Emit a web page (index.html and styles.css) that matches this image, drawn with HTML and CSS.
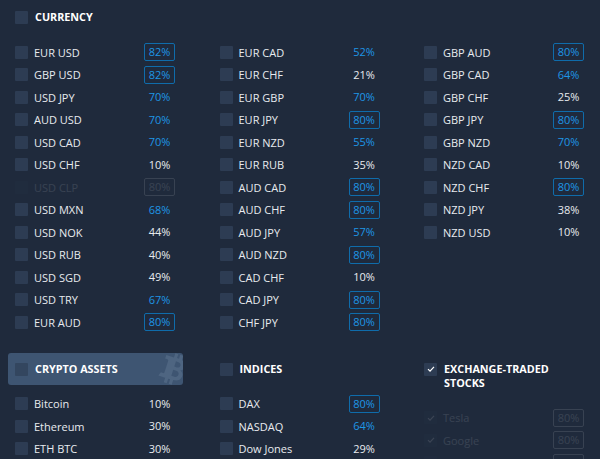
FILE: index.html
```html
<!DOCTYPE html>
<html lang="en">
<head>
<meta charset="utf-8">
<title>Assets</title>
<link rel="stylesheet" href="styles.css">
</head>
<body>
<main class="page">
  <section class="group">
    <div class="head"><span class="box"></span><span class="title">CURRENCY</span></div>
    <div class="grid">
      <div class="col">
        <div class="row"><span class="box"></span><span class="name">EUR USD</span><span class="val badge">82%</span></div>
        <div class="row"><span class="box"></span><span class="name">GBP USD</span><span class="val badge">82%</span></div>
        <div class="row"><span class="box"></span><span class="name">USD JPY</span><span class="val blue">70%</span></div>
        <div class="row"><span class="box"></span><span class="name">AUD USD</span><span class="val blue">70%</span></div>
        <div class="row"><span class="box"></span><span class="name">USD CAD</span><span class="val blue">70%</span></div>
        <div class="row"><span class="box"></span><span class="name">USD CHF</span><span class="val">10%</span></div>
        <div class="row off"><span class="box"></span><span class="name">USD CLP</span><span class="val badge">80%</span></div>
        <div class="row"><span class="box"></span><span class="name">USD MXN</span><span class="val blue">68%</span></div>
        <div class="row"><span class="box"></span><span class="name">USD NOK</span><span class="val">44%</span></div>
        <div class="row"><span class="box"></span><span class="name">USD RUB</span><span class="val">40%</span></div>
        <div class="row"><span class="box"></span><span class="name">USD SGD</span><span class="val">49%</span></div>
        <div class="row"><span class="box"></span><span class="name">USD TRY</span><span class="val blue">67%</span></div>
        <div class="row"><span class="box"></span><span class="name">EUR AUD</span><span class="val badge">80%</span></div>
      </div>
      <div class="col">
        <div class="row"><span class="box"></span><span class="name">EUR CAD</span><span class="val blue">52%</span></div>
        <div class="row"><span class="box"></span><span class="name">EUR CHF</span><span class="val">21%</span></div>
        <div class="row"><span class="box"></span><span class="name">EUR GBP</span><span class="val blue">70%</span></div>
        <div class="row"><span class="box"></span><span class="name">EUR JPY</span><span class="val badge">80%</span></div>
        <div class="row"><span class="box"></span><span class="name">EUR NZD</span><span class="val blue">55%</span></div>
        <div class="row"><span class="box"></span><span class="name">EUR RUB</span><span class="val">35%</span></div>
        <div class="row"><span class="box"></span><span class="name">AUD CAD</span><span class="val badge">80%</span></div>
        <div class="row"><span class="box"></span><span class="name">AUD CHF</span><span class="val badge">80%</span></div>
        <div class="row"><span class="box"></span><span class="name">AUD JPY</span><span class="val blue">57%</span></div>
        <div class="row"><span class="box"></span><span class="name">AUD NZD</span><span class="val badge">80%</span></div>
        <div class="row"><span class="box"></span><span class="name">CAD CHF</span><span class="val">10%</span></div>
        <div class="row"><span class="box"></span><span class="name">CAD JPY</span><span class="val badge">80%</span></div>
        <div class="row"><span class="box"></span><span class="name">CHF JPY</span><span class="val badge">80%</span></div>
      </div>
      <div class="col">
        <div class="row"><span class="box"></span><span class="name">GBP AUD</span><span class="val badge">80%</span></div>
        <div class="row"><span class="box"></span><span class="name">GBP CAD</span><span class="val blue">64%</span></div>
        <div class="row"><span class="box"></span><span class="name">GBP CHF</span><span class="val">25%</span></div>
        <div class="row"><span class="box"></span><span class="name">GBP JPY</span><span class="val badge">80%</span></div>
        <div class="row"><span class="box"></span><span class="name">GBP NZD</span><span class="val blue">70%</span></div>
        <div class="row"><span class="box"></span><span class="name">NZD CAD</span><span class="val">10%</span></div>
        <div class="row"><span class="box"></span><span class="name">NZD CHF</span><span class="val badge">80%</span></div>
        <div class="row"><span class="box"></span><span class="name">NZD JPY</span><span class="val">38%</span></div>
        <div class="row"><span class="box"></span><span class="name">NZD USD</span><span class="val">10%</span></div>
      </div>
    </div>
  </section>
  <section class="grid">
    <div class="col">
      <div class="head active">
        <span class="box"></span><span class="title">CRYPTO ASSETS</span>
        <svg class="coin" viewBox="0 0 24 32" aria-hidden="true"><path d="M9 1h3v4h2V1h3v4.400c3.500 1 5 3.400 4.600 6-.3 2-1.500 3.300-3.100 3.900 2.500.8 3.900 2.800 3.500 5.500-.5 3.500-3.100 5.200-7 5.400V31h-3v-4.600h-2V31H7v-4.600H0l1.500-3.600h2.200c.7 0 1-.4 1-1V10.200c0-.7-.4-1.200-1.200-1.200H1.300V5.300H9zm3 7.300v5.300h2.500c1.600 0 2.800-1 2.800-2.700 0-1.600-1.200-2.600-2.800-2.600zm0 8.500v6h3c1.900 0 3.200-1.200 3.200-3 0-1.900-1.300-3-3.200-3z"/></svg>
      </div>
      <div class="row"><span class="box"></span><span class="name">Bitcoin</span><span class="val">10%</span></div>
      <div class="row"><span class="box"></span><span class="name">Ethereum</span><span class="val">30%</span></div>
      <div class="row"><span class="box"></span><span class="name">ETH BTC</span><span class="val">30%</span></div>
    </div>
    <div class="col">
      <div class="head"><span class="box"></span><span class="title">INDICES</span></div>
      <div class="row"><span class="box"></span><span class="name">DAX</span><span class="val badge">80%</span></div>
      <div class="row"><span class="box"></span><span class="name">NASDAQ</span><span class="val blue">64%</span></div>
      <div class="row"><span class="box"></span><span class="name">Dow Jones</span><span class="val">29%</span></div>
    </div>
    <div class="col">
      <div class="head"><span class="box"><svg class="tick" viewBox="0 0 10 8" aria-hidden="true"><path d="M1 4.200 3.700 6.800 9 1.200"/></svg></span><span class="title">EXCHANGE-TRADED STOCKS</span></div>
      <div class="row off"><span class="box"><svg class="tick" viewBox="0 0 10 8" aria-hidden="true"><path d="M1 4.200 3.700 6.800 9 1.200"/></svg></span><span class="name">Tesla</span><span class="val badge">80%</span></div>
      <div class="row off"><span class="box"><svg class="tick" viewBox="0 0 10 8" aria-hidden="true"><path d="M1 4.200 3.700 6.800 9 1.200"/></svg></span><span class="name">Google</span><span class="val badge">80%</span></div>
      <div class="row off"><span class="box"></span><span class="name"></span><span class="val badge"></span></div>
    </div>
  </section>
</main>
</body>
</html>
```
FILE: styles.css
```css
html, body {
  margin: 0;
  height: 459px;
  overflow: hidden;
  background: #1f2a3c;
}
.page {
  box-sizing: border-box;
  height: 459px;
  overflow: hidden;
  padding: 1px 0 0 8px;
  font-family: "Open Sans", sans-serif;
  font-size: 11px;
  font-weight: 500;
  color: #e8ebef;
}
.group { height: 352px; }
.grid {
  display: grid;
  grid-template-columns: 174.5px 174.5px 174.5px;
  column-gap: 30px;
}
.group .grid { margin-top: 8px; }
.head {
  position: relative;
  display: flex;
  align-items: flex-start;
  gap: 7px;
  width: 174.5px;
  min-height: 32px;
  box-sizing: border-box;
  padding: 9px 7px;
  margin-bottom: 7.5px;
  overflow: hidden;
  border-radius: 3px;
}
.group .head { margin-bottom: 2px; }
.title {
  font-size: 10.8px;
  font-weight: 700;
  line-height: 14px;
  color: #fff;
}
.head.active { background: #3e5572; }
.head.active .box { background: #33465f; }
.coin {
  position: absolute;
  right: -3px;
  top: -2px;
  width: 25px;
  height: 36px;
  fill: #4e6581;
  transform: rotate(18deg);
}
.box {
  flex: none;
  display: flex;
  align-items: center;
  justify-content: center;
  width: 13px;
  height: 13px;
  margin-top: 0.5px;
  background: #2d3c53;
  border-radius: 1px;
}
.row .box { margin-top: 0; }
.tick {
  width: 8px;
  height: 6px;
  fill: none;
  stroke: #fff;
  stroke-width: 1.6;
}
.row {
  display: flex;
  align-items: center;
  height: 22.5px;
  padding: 0 7.5px 0 7px;
}
.name {
  flex: 1;
  margin-left: 6px;
  white-space: nowrap;
}
.val {
  box-sizing: border-box;
  width: 31px;
  height: 18px;
  line-height: 15px;
  text-align: center;
  border: 1.5px solid transparent;
  border-radius: 2px;
}
.blue { color: #1e96e6; }
.badge {
  color: #1e96e6;
  border-color: #0f6cab;
}
.off { opacity: 0.12; }
.off .badge { color: #e8ebef; border-color: #e8ebef; }
```
